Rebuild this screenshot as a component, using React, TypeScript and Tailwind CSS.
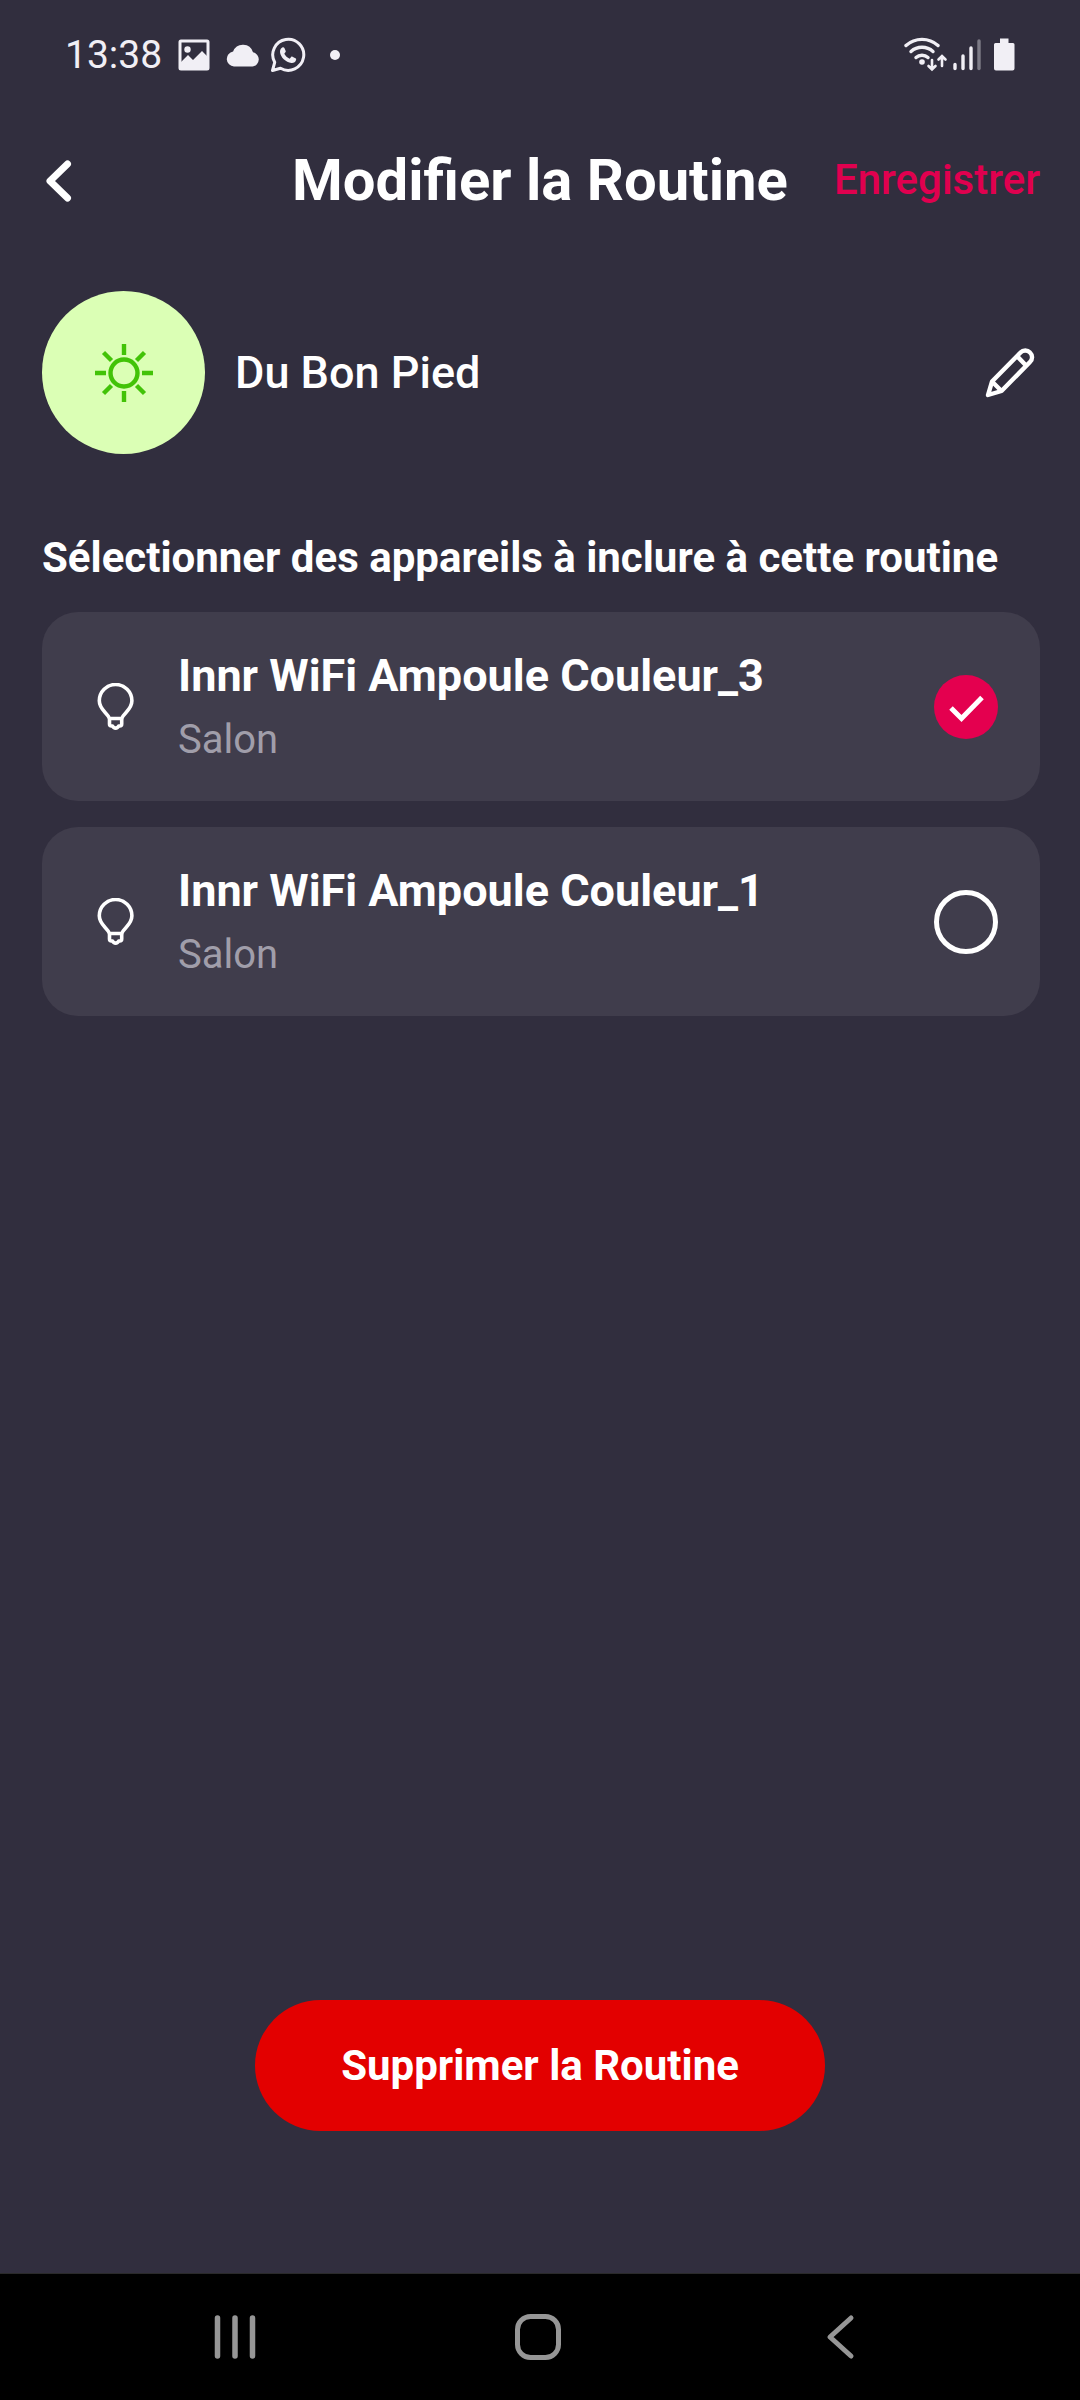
import { useState } from 'react';

const devices = [
  { id: 'innr-3', name: 'Innr WiFi Ampoule Couleur_3', room: 'Salon', selected: true },
  { id: 'innr-1', name: 'Innr WiFi Ampoule Couleur_1', room: 'Salon', selected: false },
];

function StatusBar() {
  return (
    <div className="flex h-[110px] items-center justify-between pr-16 pl-[65px] text-[#f1eff5]">
      <div className="flex items-center">
        <span className="text-[39px] leading-[48px]">13:38</span>
        <svg className="ml-4 h-8 w-8" viewBox="0 0 32 32" fill="none">
          <rect x="2" y="2" width="28" height="28" rx="1" stroke="currentColor" strokeWidth="3" />
          <circle cx="9.5" cy="10.5" r="3.2" fill="currentColor" />
          <path d="M3 23l7-7 5 5 9-9 6 6v12H3z" fill="currentColor" />
        </svg>
        <svg className="ml-4 h-6 w-[34px]" viewBox="0 0 34 24" fill="currentColor">
          <path d="M8 23.500a7.500 7.500 0 0 1-.9-14.900A10.500 10.500 0 0 1 27 9.300a7.200 7.200 0 0 1-.5 14.200z" />
        </svg>
        <svg className="ml-[10px] h-9 w-9" viewBox="0 0 36 36" fill="none">
          <path
            d="M2.500 33.500l2.200-8.200A15.500 15.500 0 1 1 10.500 31.200z"
            stroke="currentColor"
            strokeWidth="3"
            strokeLinejoin="round"
          />
          <path
            d="M12.700 10.200c.7-.2 1.400 0 1.700.7l1.300 3c.2.600 0 1-.3 1.400l-1.100 1.400c1.200 2.300 3 3.900 5.400 5l1.400-1.700c.4-.5.9-.5 1.400-.3l2.900 1.500c.7.400.9.700.7 1.500-.5 2.300-2.500 3.400-4.600 3.200-5.800-.7-11-5.700-11.500-11-.1-2 1-4.100 2.700-4.700z"
            fill="currentColor"
          />
        </svg>
        <span className="ml-6 h-[10px] w-[10px] rounded-full bg-[#f1eff5]" />
      </div>
      <div className="flex items-center">
        <svg className="h-9 w-11" viewBox="0 0 44 36" fill="none" stroke="currentColor" strokeWidth="3.400" strokeLinecap="round">
          <path d="M2 8.500a24 24 0 0 1 32 0" />
          <path d="M7 14.500a16.500 16.500 0 0 1 22 0" />
          <path d="M12 20.500a9 9 0 0 1 12 0" />
          <circle cx="18" cy="25" r="2.800" fill="currentColor" stroke="none" />
          <path d="M28 23v9M24.500 29l3.500 3.500 3.500-3.500M38 29v-9M34.500 22.500l3.500-3.500 3.500 3.500" strokeWidth="2.600" />
        </svg>
        <svg className="ml-1 h-9 w-8" viewBox="0 0 32 36" fill="none" stroke="currentColor" strokeWidth="3.400" strokeLinecap="round">
          <path d="M3 27.500v4M11 19v12.500M19 11v20.500" />
          <path d="M27 4v27.500" opacity="0.4" />
        </svg>
        <svg className="ml-2 h-9 w-6" viewBox="0 0 24 36" fill="currentColor">
          <path d="M8 1.500h8.500V6h4.500a1.500 1.500 0 0 1 1.500 1.500v24a2 2 0 0 1-2 2h-16.500a2 2 0 0 1-2-2v-24A1.500 1.500 0 0 1 3.500 6H8z" />
        </svg>
      </div>
    </div>
  );
}

function Header() {
  return (
    <header className="grid grid-cols-[1fr_auto_1fr] items-center px-10">
      <button type="button" aria-label="Retour" className="flex h-[72px] w-9 items-center justify-center">
        <svg className="h-12 w-9" viewBox="0 0 36 48" fill="none" stroke="currentColor" strokeWidth="7" strokeLinecap="round" strokeLinejoin="round">
          <path d="M27.500 8L10 25l17.500 17" />
        </svg>
      </button>
      <h1 className="text-[58px] leading-[72px] font-bold">Modifier la Routine</h1>
      <button type="button" className="justify-self-end text-[42px] leading-[72px] font-medium text-[#e0004f]">
        Enregistrer
      </button>
    </header>
  );
}

function RoutineRow() {
  return (
    <section className="mt-[75px] flex items-center pr-[38px] pl-[42px]">
      <span className="flex h-[163px] w-[163px] shrink-0 items-center justify-center rounded-full bg-[#dbffb5]">
        <svg className="h-[60px] w-[60px]" viewBox="0 0 60 60" fill="none" stroke="#42c307" strokeWidth="4.400">
          <circle cx="30" cy="30" r="13.500" />
          <path d="M30 1v11M30 48v11M1 30h11M48 30h11M9.500 9.500l8 8M42.500 42.500l8 8M9.500 50.500l8-8M42.500 17.500l8-8" />
        </svg>
      </span>
      <h2 className="ml-[30px] flex-1 text-[45px] leading-[56px] font-medium">Du Bon Pied</h2>
      <button type="button" aria-label="Modifier le nom" className="flex h-16 w-16 items-center justify-center">
        <svg className="h-[52px] w-[52px]" viewBox="0 0 52 52" fill="none" stroke="currentColor" strokeWidth="4.400" strokeLinejoin="round">
          <path d="M4 48l4-13.500L36.500 5.500a6.500 6.500 0 0 1 9.500 0 6.500 6.500 0 0 1 0 9.500L17.500 44z" />
          <path d="M33 9l9.500 10M8 34.500l9.500 9.500" />
        </svg>
      </button>
    </section>
  );
}

function BulbIcon() {
  return (
    <svg className="h-12 w-10 shrink-0" viewBox="0 0 40 48" fill="none" stroke="currentColor" strokeWidth="3.600" strokeLinejoin="round">
      <path d="M13.500 35.500C11.500 29.500 3.300 27 3.300 17.800a16.300 16.300 0 0 1 32.600 0c0 9.200-8.200 11.700-10.200 17.700z" />
      <path d="M13.500 35.500V41c0 1.200.8 2 2 2h1c1.300 2.800 4.900 2.800 6.200 0h1c1.200 0 2-.8 2-2v-5.500" />
    </svg>
  );
}

export default function App() {
  const [selected, setSelected] = useState(devices.filter(d => d.selected).map(d => d.id));

  const toggle = (id: string) =>
    setSelected(prev => (prev.includes(id) ? prev.filter(s => s !== id) : [...prev, id]));

  return (
    <div className="flex min-h-screen flex-col bg-[#312e3e] font-[Roboto,sans-serif] text-white">
      <StatusBar />
      <main className="flex flex-1 flex-col pt-[34px]">
        <Header />
        <RoutineRow />

        <section className="mt-[76px] pr-10 pl-[42px]">
          <h3 className="text-[42px] leading-[56px] font-bold">Sélectionner des appareils à inclure à cette routine</h3>
          <ul className="mt-[26px] flex flex-col gap-[26px]">
            {devices.map(device => (
              <li key={device.id}>
                <label htmlFor={device.id} className="flex h-[189px] items-center rounded-[36px] bg-[#403d4c] pr-[42px] pl-[54px]">
                  <BulbIcon />
                  <span className="ml-[42px] flex flex-1 flex-col gap-2 pt-0.5">
                    <span className="text-[45px] leading-[56px] font-bold">{device.name}</span>
                    <span className="text-[40px] leading-[56px] text-[#a09eaa]">{device.room}</span>
                  </span>
                  <span className="relative h-16 w-16 shrink-0">
                    <input
                      id={device.id}
                      type="checkbox"
                      checked={selected.includes(device.id)}
                      onChange={() => toggle(device.id)}
                      className="peer block h-16 w-16 appearance-none rounded-full border-[5px] border-white checked:border-0 checked:bg-[#e4004f]"
                    />
                    <svg
                      className="pointer-events-none absolute inset-0 hidden h-16 w-16 peer-checked:block"
                      viewBox="0 0 64 64"
                      fill="none"
                      stroke="currentColor"
                      strokeWidth="5"
                    >
                      <path d="M17 33l10.500 10.500L48 22.500" />
                    </svg>
                  </span>
                </label>
              </li>
            ))}
          </ul>
        </section>

        <button type="button" className="mt-auto mb-[142px] h-[131px] self-center rounded-full bg-[#e30000] px-[86px] text-[42px] leading-[56px] font-bold">
          Supprimer la Routine
        </button>
      </main>

      <nav className="grid h-[127px] grid-cols-3 place-items-center border-t border-[#2a2a2a] bg-black pr-[88px] pl-[84px] text-[#969696]">
        <button type="button" aria-label="Applications récentes">
          <svg className="h-12 w-12" viewBox="0 0 48 48" fill="none" stroke="currentColor" strokeWidth="5.500" strokeLinecap="round">
            <path d="M6.500 5v38M24 5v38M41.500 5v38" />
          </svg>
        </button>
        <button type="button" aria-label="Accueil">
          <svg className="h-12 w-12" viewBox="0 0 48 48" fill="none" stroke="currentColor" strokeWidth="5">
            <rect x="3.500" y="3.500" width="41" height="41" rx="13" />
          </svg>
        </button>
        <button type="button" aria-label="Retour système">
          <svg className="h-12 w-12" viewBox="0 0 48 48" fill="none" stroke="currentColor" strokeWidth="5" strokeLinecap="round" strokeLinejoin="round">
            <path d="M34 5L13 24l21 19" />
          </svg>
        </button>
      </nav>
    </div>
  );
}
